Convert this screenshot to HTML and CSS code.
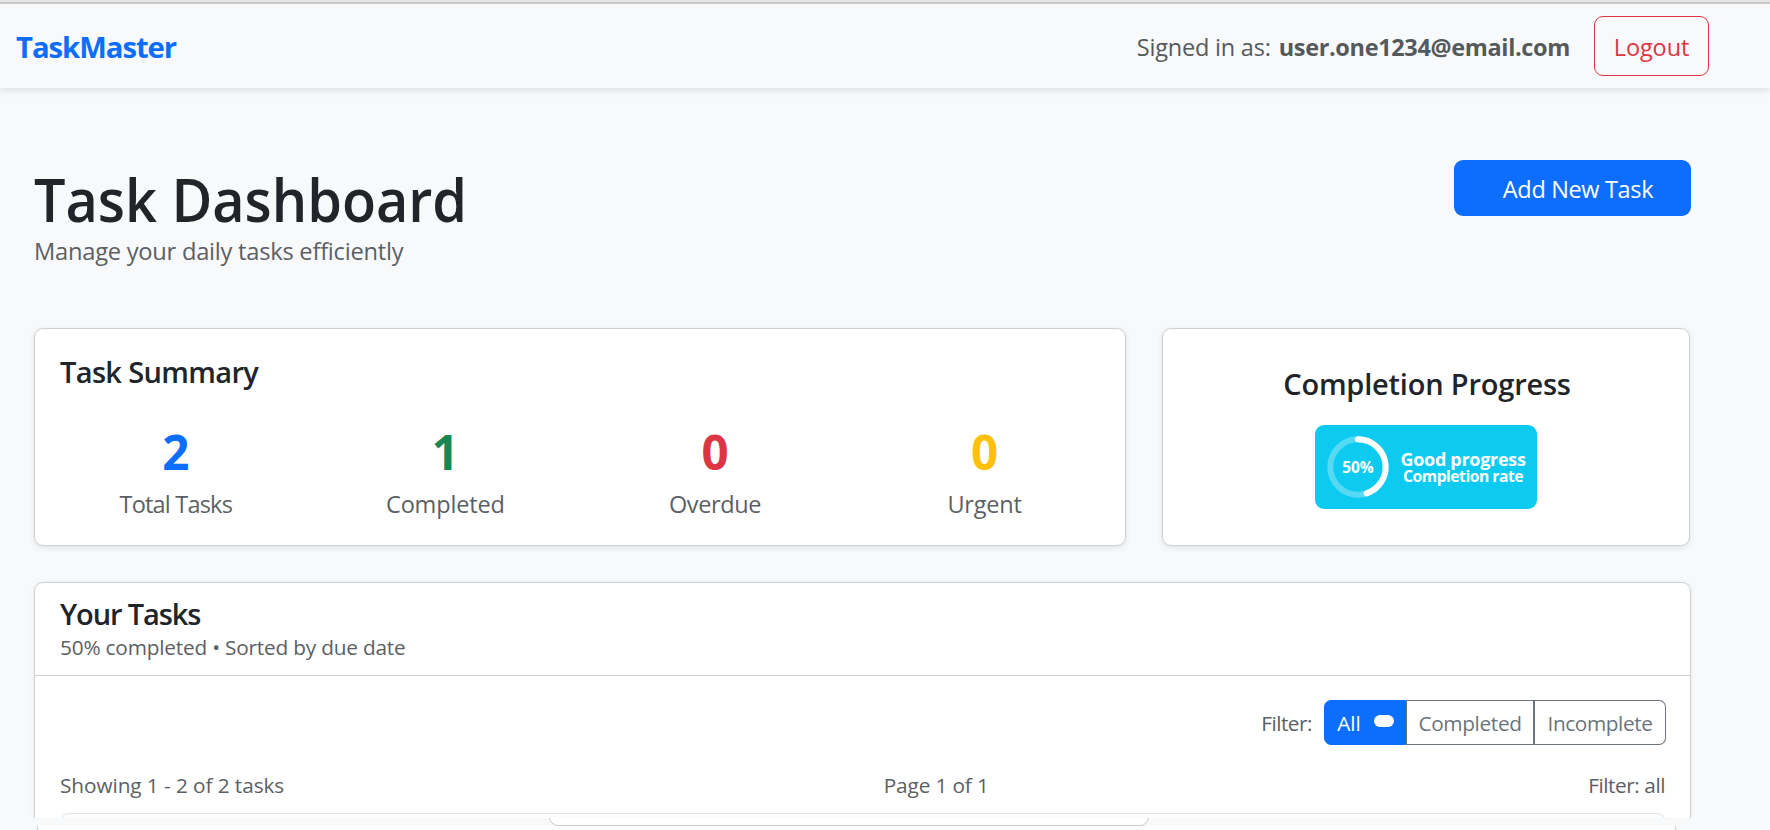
FILE: index.html
```html
<!DOCTYPE html>
<html lang="en">
<head>
<meta charset="utf-8">
<title>TaskMaster</title>
<link rel="stylesheet" href="styles.css">
</head>
<body>
<div class="page">
  <nav class="navbar">
    <a class="brand">TaskMaster</a>
    <div class="account">
      <span class="signed">Signed in as:</span>
      <strong class="email">user.one1234@email.com</strong>
      <button class="logout"><span class="logout-text">Logout</span></button>
    </div>
  </nav>
  <main class="main">
    <header class="head">
      <div class="head-text">
        <h1 class="title">Task Dashboard</h1>
        <p class="subtitle">Manage your daily tasks efficiently</p>
      </div>
      <button class="add"><span class="add-text">Add New Task</span></button>
    </header>
    <section class="overview">
      <div class="card summary">
        <h2 class="h2 summary-title">Task Summary</h2>
        <div class="stats">
          <div class="stat"><b class="num blue">2</b><span class="label l-total">Total Tasks</span></div>
          <div class="stat"><b class="num green">1</b><span class="label l-comp">Completed</span></div>
          <div class="stat"><b class="num red">0</b><span class="label l-over">Overdue</span></div>
          <div class="stat"><b class="num yellow">0</b><span class="label l-urg">Urgent</span></div>
        </div>
      </div>
      <div class="card progress">
        <h2 class="h2 progress-title">Completion Progress</h2>
        <div class="badge">
          <div class="ring">
            <svg class="ring-svg" viewBox="0 0 62 62">
              <circle cx="31" cy="31" r="27.7" fill="none" stroke="#fff" stroke-opacity=".3" stroke-width="6"/>
              <path d="M31 3.3A27.7 27.7 0 0 1 39.6 57.3" fill="none" stroke="#fff" stroke-width="6" stroke-linecap="round"/>
            </svg>
            <span class="pct">50%</span>
          </div>
          <div class="badge-text">
            <span class="good">Good progress</span>
            <span class="rate">Completion rate</span>
          </div>
        </div>
      </div>
    </section>
    <section class="tasks">
      <header class="tasks-head">
        <h2 class="h2 tasks-title">Your Tasks</h2>
        <p class="small tasks-sub">50% completed • Sorted by due date</p>
      </header>
      <div class="toolbar">
        <span class="small filter-label">Filter:</span>
        <div class="group">
          <button class="seg active"><span class="seg-all">All</span><i class="pill"></i></button>
          <button class="seg seg-2"><span class="seg-c">Completed</span></button>
          <button class="seg seg-3"><span class="seg-i">Incomplete</span></button>
        </div>
      </div>
      <div class="info small">
        <span class="showing">Showing 1 - 2 of 2 tasks</span>
        <span class="pageno">Page 1 of 1</span>
        <span class="current">Filter: all</span>
      </div>
      <div class="table-clip"><div class="table"></div></div>
    </section>
  </main>
  <div class="strip"><div class="tab-clip"><div class="tab"></div></div></div>
  <div class="next"></div>
</div>
</body>
</html>
```
FILE: styles.css
```css
* { box-sizing: border-box; }
body { margin: 0; background: #f8f9fb; color: #212529; font-family: "Open Sans", "Noto Sans", sans-serif; }
h1, h2, p { margin: 0; }
button { font: inherit; margin: 0; padding: 0; }
.page { width: 1770px; height: 830px; overflow: hidden; border-top: 2px solid #e6e6e6; white-space: nowrap; }
.navbar { height: 86px; border-top: 2px solid #c9c9c9; padding: 0 61px 0 16px; display: flex; align-items: center; justify-content: space-between; box-shadow: 0 2px 8px rgba(0,0,0,.12); background: #f8f9fb; }
.brand { font-size: 29.3px; font-weight: 700; color: #0d6efd; letter-spacing: -1.05px; padding-top: 1px; }
.account { display: flex; align-items: center; font-size: 23.5px; color: #55595c; }
.signed { letter-spacing: -.2px; margin-right: 8px; padding-top: 1px; }
.email { font-weight: 700; letter-spacing: -.35px; margin-right: 24px; padding-top: 1px; }
.logout { width: 115px; height: 60px; border: 1px solid #dc3545; border-radius: 9px; background: none; color: #dc3545; letter-spacing: -.1px; padding-top: 1px; }
.main { padding: 72px 79px 0 34px; }
.head { display: flex; justify-content: space-between; align-items: flex-start; height: 168px; }
.head-text { padding-top: 3px; }
.title { font-size: 59px; line-height: 72px; font-weight: 600; transform: scaleX(.945); transform-origin: left; }
.subtitle { font-size: 23.7px; line-height: 32px; color: #5c6064; letter-spacing: -.25px; }
.add { width: 237px; height: 56px; border: 0; border-radius: 9px; background: #0d6efd; color: #fff; font-size: 23.5px; padding: 1px 0 0 11px; letter-spacing: -.35px; }
.overview { display: grid; grid-template-columns: 1092px 528px; gap: 36px; height: 218px; }
.card { background: #fff; border: 1px solid #cfd0d2; border-radius: 9px; box-shadow: 0 2px 6px rgba(0,0,0,.09); }
.h2 { font-size: 29px; line-height: 36px; font-weight: 600; }
.summary { padding-top: 25px; }
.summary-title { padding-left: 25px; letter-spacing: -.65px; }
.progress-title { letter-spacing: -.2px; padding-left: 2px; }
.tasks-title { letter-spacing: -1.1px; }
.stats { display: grid; grid-template-columns: repeat(4, 269.6px); margin: 33px 0 0 6px; }
.stat { display: flex; flex-direction: column; align-items: center; }
.num { font-size: 47.5px; line-height: 58px; font-weight: 700; }
.label { font-size: 23.5px; line-height: 36px; margin-top: 5px; color: #5c6064; }
.l-total { letter-spacing: -.8px; }
.l-comp { letter-spacing: -.15px; }
.l-over { letter-spacing: -.4px; }
.l-urg { letter-spacing: -.2px; }
.blue { color: #0d6efd; } .green { color: #198754; } .red { color: #dc3545; } .yellow { color: #ffc107; }
.progress { display: flex; flex-direction: column; align-items: center; padding-top: 37px; }
.badge { width: 222px; height: 84px; border-radius: 9px; background: #0dcaf0; color: #fff; margin-top: 23px; display: flex; align-items: center; padding-left: 12px; font-weight: 700; }
.ring { width: 62px; height: 62px; display: grid; place-items: center; }
.ring-svg, .pct { grid-area: 1 / 1; }
.ring-svg { width: 62px; height: 62px; }
.pct { font-size: 15.5px; }
.badge-text { width: 126px; margin-left: 11px; display: flex; flex-direction: column; align-items: center; }
.good { font-size: 18px; line-height: 17px; letter-spacing: -.3px; }
.rate { font-size: 15.7px; line-height: 16px; letter-spacing: -.5px; }
.tasks { height: 236px; margin-top: 36px; background: #fff; border: 1px solid #cfd0d2; border-bottom: 0; border-radius: 9px 9px 0 0; box-shadow: 0 0 5px rgba(0,0,0,.06); }
.tasks-head { height: 93px; padding: 13px 25px 0; border-bottom: 1px solid #cfd0d2; }
.small { font-size: 20.8px; line-height: 32px; color: #5c6064; }
.tasks-sub { letter-spacing: -.2px; line-height: 30px; }
.toolbar { display: flex; justify-content: flex-end; align-items: center; margin: 24px 24px 0 0; }
.filter-label { margin-right: 12px; letter-spacing: -.5px; }
.group { display: flex; width: 342px; height: 45px; font-size: 20.8px; }
.seg { border: 1px solid #6c757d; background: #fff; color: #6c757d; display: flex; align-items: center; justify-content: center; }
.active { width: 82px; background: #0d6efd; border-color: #0d6efd; color: #fff; border-radius: 7px 0 0 7px; padding-left: 1px; }
.seg-2 { width: 129px; border-width: 1px 2px 1px 1px; letter-spacing: -.35px; }
.seg-3 { width: 131px; border-left: 0; border-radius: 0 7px 7px 0; letter-spacing: -.4px; }
.pill { width: 20px; height: 12px; border-radius: 6px; background: #f8f9fa; margin: 0 0 4px 13px; }
.info { display: flex; justify-content: space-between; padding: 0 25px; margin-top: 24px; }
.showing { letter-spacing: -.08px; }
.pageno { letter-spacing: -.15px; }
.current { letter-spacing: -.45px; }
.table-clip { height: 5px; margin: 12px 24px 0 25px; overflow: hidden; }
.table { height: 30px; border: 1px solid #dee2e6; border-radius: 9px; background: #fcfcfd; }
.strip { height: 8px; background: #f8f9fb; padding-left: 549px; }
.tab-clip { width: 600px; height: 8px; overflow: hidden; display: flex; align-items: flex-end; }
.tab { width: 600px; height: 40px; flex: none; border: 1px solid #c9cacc; border-radius: 9px; background: #fff; }
.next { height: 4px; margin: 0 94px 0 37px; background: #fff; border: solid #cfd0d2; border-width: 0 1px; }
```
